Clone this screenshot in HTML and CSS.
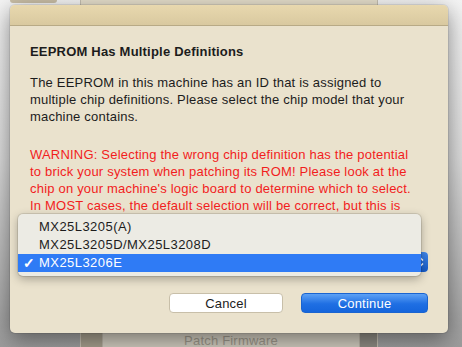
FILE: index.html
```html
<!DOCTYPE html>
<html lang="en">
  <head>
    <meta charset="utf-8" />
    <title>EEPROM Has Multiple Definitions</title>
    <link rel="stylesheet" href="styles.css">
  </head>
  <body>
    <div class="desk">
      <div class="parent-tab"></div>
      <div class="parent">
        <div class="parent-body"></div>
        <div class="parent-foot">
          <span class="foot-strip"></span>
          <span class="patch-btn">Patch Firmware</span>
        </div>
      </div>

      <section class="sheet">
        <div class="titlebar"></div>
        <div class="content">
          <h1>EEPROM Has Multiple Definitions</h1>
          <p class="info">
            The EEPROM in this machine has an ID that is assigned to<br>
            multiple chip definitions. Please select the chip model that your<br>
            machine contains.
          </p>
          <p class="warning">
            WARNING: Selecting the wrong chip definition has the potential<br>
            to brick your system when patching its ROM! Please look at the<br>
            chip on your machine's logic board to determine which to select.<br>
            In MOST cases, the default selection will be correct, but this is
          </p>
          <div class="popup">
            <span class="chevrons">
              <svg width="7" height="12" viewBox="0 0 7 12"><path d="M1 4.5 3.5 2 6 4.5M1 7.5 3.5 10 6 7.5" fill="none" stroke="#fff" stroke-width="1.4"/></svg>
            </span>
          </div>
          <div class="actions">
            <button class="btn">Cancel</button>
            <button class="btn primary">Continue</button>
          </div>
        </div>

        <ul class="menu">
          <li>MX25L3205(A)</li>
          <li>MX25L3205D/MX25L3208D</li>
          <li class="selected"><span class="check">✓</span>MX25L3206E</li>
        </ul>
      </section>
    </div>
  </body>
</html>
```

FILE: styles.css
```css
body {
  margin: 0;
  font-family: 'Liberation Sans', Arial, sans-serif;
  -webkit-font-smoothing: antialiased;
}

.desk {
  position: relative;
  width: 462px;
  height: 347px;
  overflow: hidden;
  background: linear-gradient(#f4f4f4 0%, #dcdcdc 45%, #9c9c9c 100%);
}

/* window behind the sheet */
.parent-tab {
  position: absolute;
  left: 10px;
  top: 0;
  width: 47px;
  height: 3px;
  background: #c9bea6;
  border-radius: 0 0 4px 4px;
}
.parent {
  margin-left: 80px;
  width: 296px;
  height: 347px;
  display: flex;
  flex-direction: column;
  border-left: 1px solid #c6c0b2;
  border-right: 1px solid #c6c0b2;
}
.parent-body {
  flex: 1;
  background: #e6dfcc;
}
.parent-foot {
  height: 14px;
  display: flex;
  background: #8d8a82;
}
.foot-strip {
  width: 21px;
  background: #a49d8c;
}
.patch-btn {
  width: 256px;
  background: #cfcabd;
  color: #9c978b;
  font-size: 13px;
  line-height: 16px;
  letter-spacing: 0.2px;
  text-align: center;
  border-left: 1px solid #b9b3a6;
  border-right: 1px solid #b9b3a6;
}

/* sheet dialog */
.sheet {
  position: absolute;
  left: 10px;
  top: 5px;
  width: 438px;
  height: 328px;
  background: #eae2cd;
  border-radius: 5px;
  box-shadow: 0 6px 22px rgba(0, 0, 0, 0.45), 0 0 0 1px rgba(0, 0, 0, 0.08);
}
.titlebar {
  height: 20px;
  border-radius: 5px 5px 0 0;
  background: linear-gradient(#e8d8ae, #d9c9a0);
  border-bottom: 1px solid #b8aa86;
}
.content {
  padding: 17px 20px 0 20px;
  color: #1c1c1c;
  font-size: 13px;
  line-height: 17px;
  letter-spacing: 0.2px;
}
.content h1 {
  margin: 0;
  font-size: 13px;
  font-weight: bold;
}
.content p {
  margin: 0;
  white-space: nowrap;
}
.info {
  margin-top: 14px !important;
}
.warning {
  margin-top: 21px !important;
  color: #f21d1d;
}

/* popup button, mostly covered by its open menu */
.popup {
  margin-top: 38px;
  height: 20px;
  display: flex;
  justify-content: flex-end;
  background: #fff;
  border-radius: 4px;
}
.chevrons {
  width: 16px;
  height: 20px;
  display: flex;
  align-items: center;
  justify-content: center;
  background: linear-gradient(#3f86ea, #1559c4);
  border-radius: 0 4px 4px 0;
}

.actions {
  margin-top: 21px;
  display: flex;
  justify-content: flex-end;
  gap: 18px;
}
.btn {
  height: 20px;
  width: 114px;
  font-family: inherit;
  font-size: 13px;
  letter-spacing: 0.2px;
  color: #1c1c1c;
  background: #fff;
  border: 1px solid #c8bfa9;
  border-radius: 4px;
  padding: 0;
}
.btn.primary {
  width: 127px;
  color: #fff;
  border: 1px solid #1a64d0;
  background: linear-gradient(#5da1f5, #1f6fe3 55%, #1565dc);
}

/* open popup menu */
.menu {
  position: absolute;
  left: 8px;
  top: 209px;
  width: 403px;
  margin: 0;
  padding: 4px 0;
  list-style: none;
  background: #ecebe4;
  border-radius: 5px;
  box-shadow: 0 3px 10px rgba(0, 0, 0, 0.3), 0 0 0 1px rgba(0, 0, 0, 0.1);
  font-size: 13px;
  letter-spacing: 0.45px;
  color: #1c1c1c;
}
.menu li {
  position: relative;
  height: 18px;
  line-height: 18px;
  padding-left: 21px;
}
.menu li.selected {
  background: #2f7bf5;
  color: #fff;
}
.menu .check {
  position: absolute;
  left: 5px;
  font-size: 14px;
  font-weight: bold;
}
```
